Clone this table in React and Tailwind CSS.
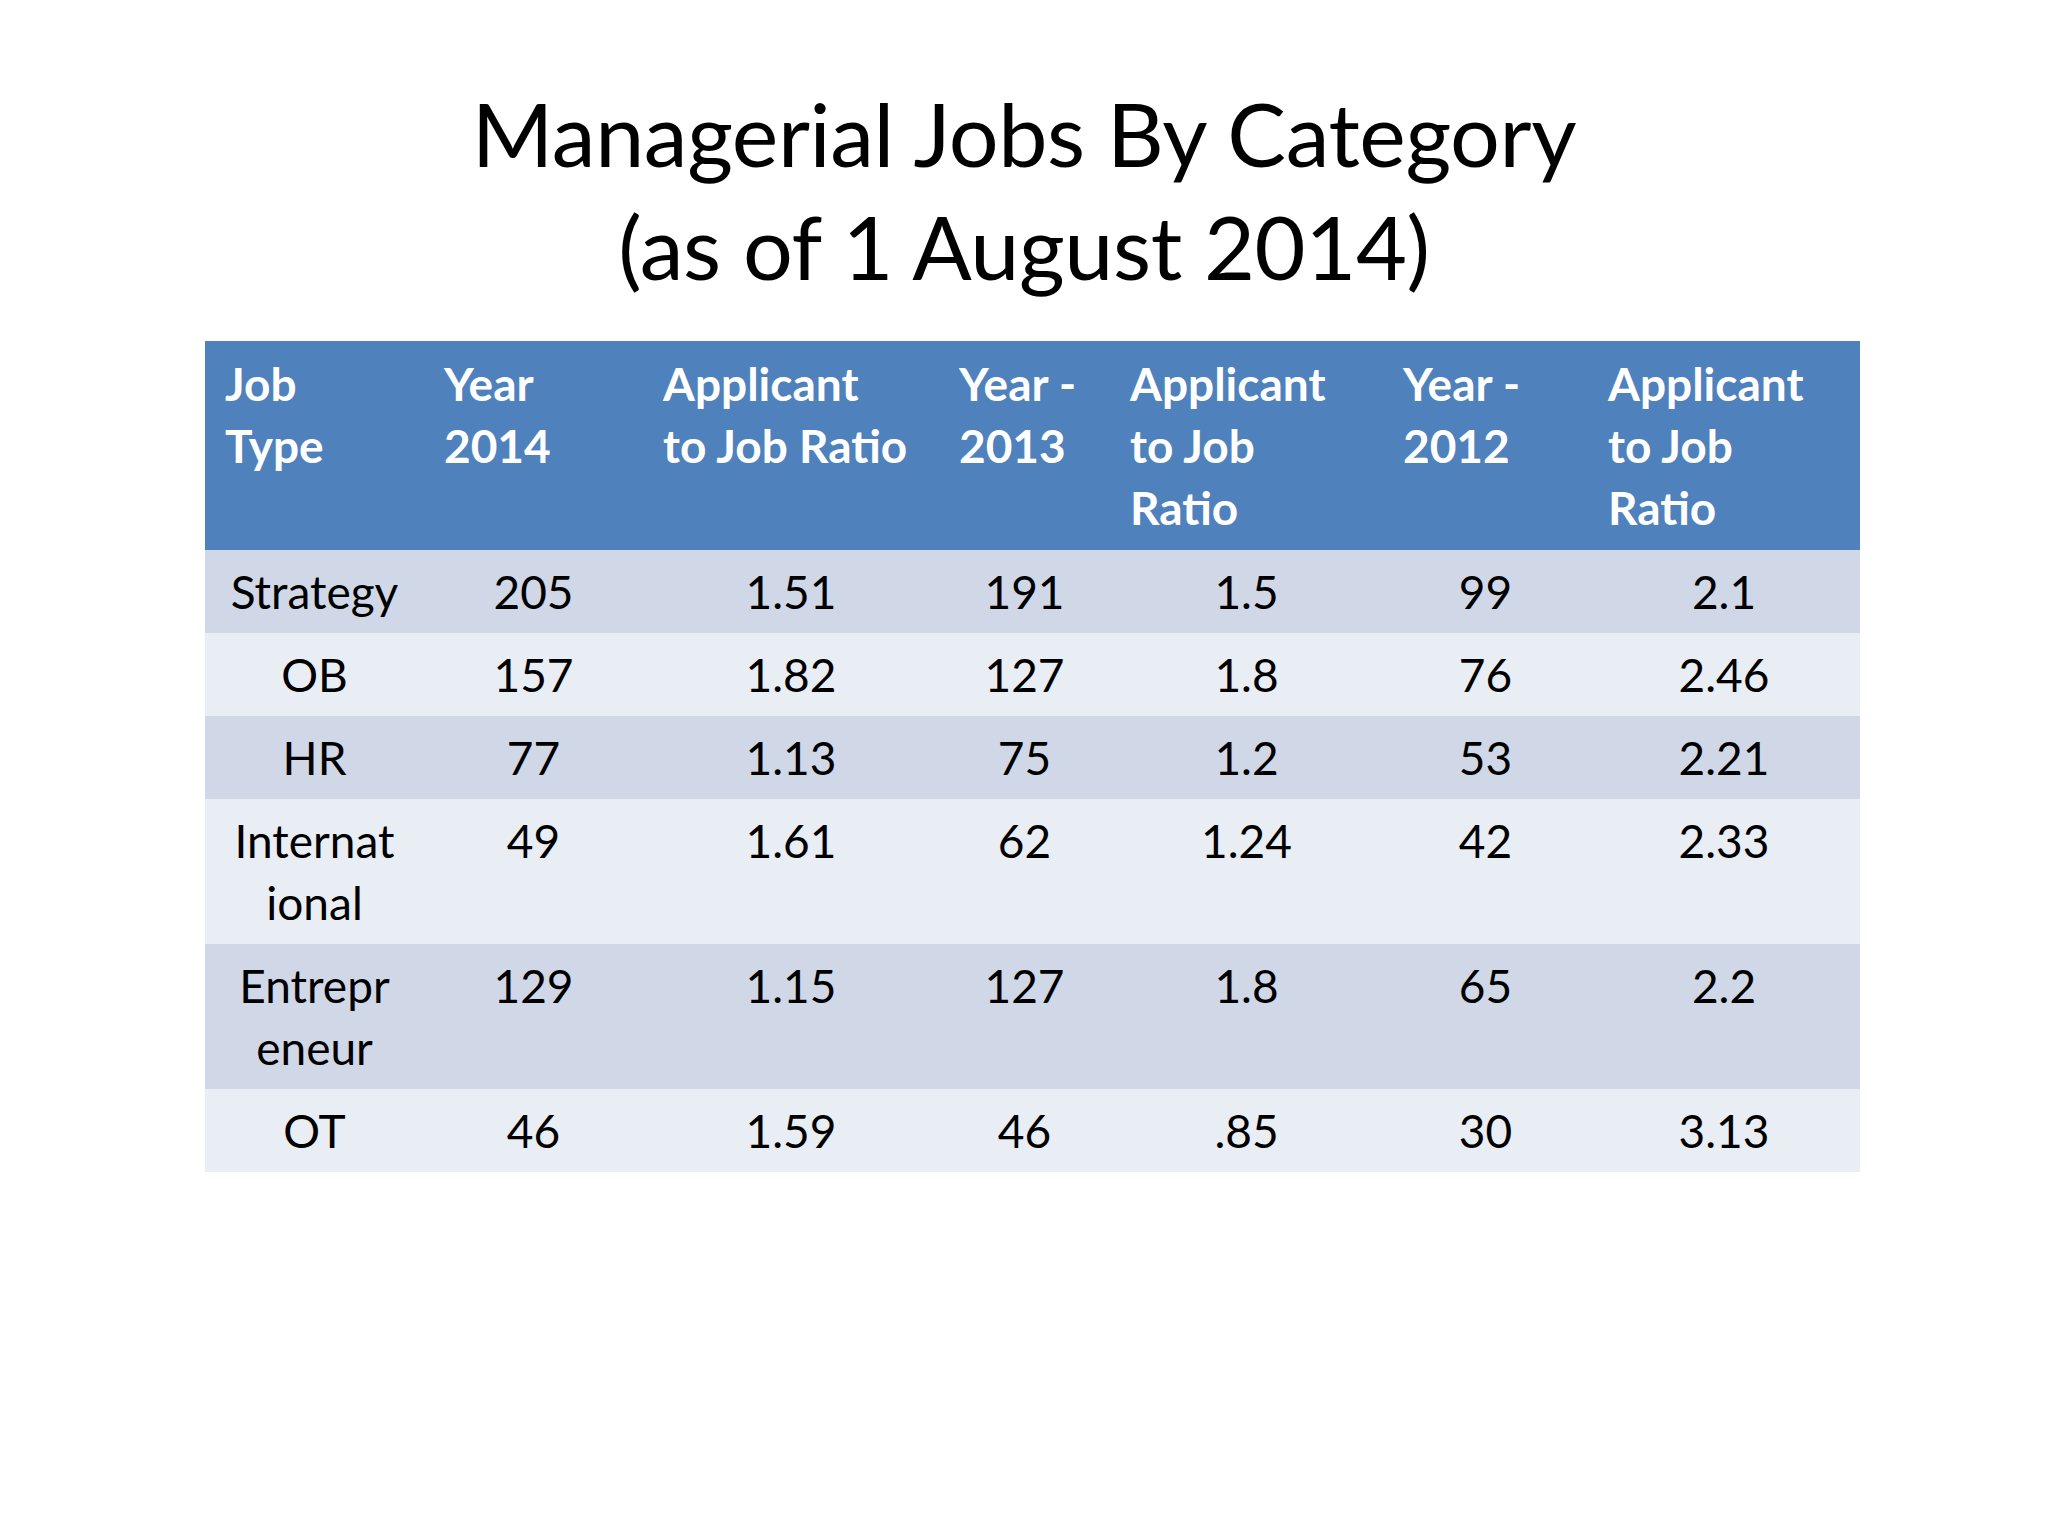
import React from "react";

const cols = "grid-cols-[219px_219px_296px_171px_273px_205px_272px]";

const headers = [
  ["Job", "Type"],
  ["Year", "2014"],
  ["Applicant", "to Job Ratio"],
  ["Year -", "2013"],
  ["Applicant", "to Job", "Ratio"],
  ["Year -", "2012"],
  ["Applicant", "to Job", "Ratio"],
];

const rows = [
  [["Strategy"], "205", "1.51", "191", "1.5", "99", "2.1"],
  [["OB"], "157", "1.82", "127", "1.8", "76", "2.46"],
  [["HR"], "77", "1.13", "75", "1.2", "53", "2.21"],
  [["Internat", "ional"], "49", "1.61", "62", "1.24", "42", "2.33"],
  [["Entrepr", "eneur"], "129", "1.15", "127", "1.8", "65", "2.2"],
  [["OT"], "46", "1.59", "46", ".85", "30", "3.13"],
];

export default function App() {
  return (
    <div className="w-[2048px] h-[1536px] bg-white text-black font-['Lato',sans-serif]">
      <h1 className="pt-[77px] text-center text-[88px] leading-[113px] font-normal tracking-[-0.4px]">
        Managerial Jobs By Category
        <br />
        (as of 1 August 2014)
      </h1>

      <div className="mt-[38px] ml-[205px] w-[1655px]">
        <div className={`grid ${cols} bg-[#4f81bd] text-white font-bold text-[46px] leading-[62px]`}>
          {headers.map((h, i) => (
            <div key={i} className="pl-[20px] pt-[12px] h-[209px] whitespace-nowrap">
              {h.map((line, j) => (
                <div key={j}>{line}</div>
              ))}
            </div>
          ))}
        </div>

        {rows.map((r, i) => (
          <div
            key={i}
            className={`grid ${cols} text-[46px] leading-[62px] ${
              i % 2 === 0 ? "bg-[#d0d8e8]" : "bg-[#e9edf4]"
            }`}
          >
            <div className="text-center pt-[11px] pb-[10px] whitespace-nowrap">
              {r[0].map((line, j) => (
                <div key={j}>{line}</div>
              ))}
            </div>
            {r.slice(1).map((v, j) => (
              <div key={j} className="text-center pt-[11px] pb-[10px]">
                {v}
              </div>
            ))}
          </div>
        ))}
      </div>
    </div>
  );
}
